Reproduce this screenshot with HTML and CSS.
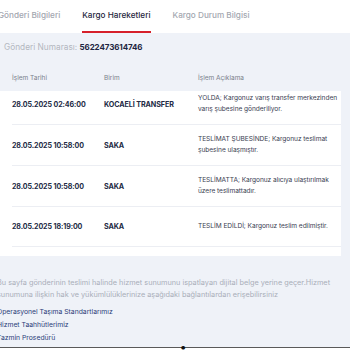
FILE: index.html
```html
<!DOCTYPE html>
<html lang="tr">
<head>
  <meta charset="UTF-8" />
  <meta name="viewport" content="width=device-width, initial-scale=1.0"/>
  <title>Kargo Hareketleri</title>
  <link rel="stylesheet" href="styles.css">
</head>
<body>
  <div class="tabs">
    <div class="tab">Gönderi Bilgileri</div>
    <div class="tab active">Kargo Hareketleri</div>
    <div class="tab">Kargo Durum Bilgisi</div>
  </div>

  <div class="panel">
    <div class="shipment">Gönderi Numarası: <b>5622473614746</b></div>

    <div class="moves">
      <div class="row head">
        <div>İşlem Tarihi</div>
        <div>Birim</div>
        <div>İşlem Açıklama</div>
      </div>
      <div class="list">
        <div class="row item first">
          <div class="date">28.05.2025 02:46:00</div>
          <div class="unit">KOCAELİ TRANSFER</div>
          <div class="desc">YOLDA; Kargonuz varış transfer merkezinden varış şubesine gönderiliyor.</div>
        </div>
        <div class="row item">
          <div class="date">28.05.2025 10:58:00</div>
          <div class="unit">SAKA</div>
          <div class="desc">TESLİMAT ŞUBESİNDE; Kargonuz teslimat şubesine ulaşmıştır.</div>
        </div>
        <div class="row item">
          <div class="date">28.05.2025 10:58:00</div>
          <div class="unit">SAKA</div>
          <div class="desc">TESLİMATTA; Kargonuz alıcıya ulaştırılmak üzere teslimattadır.</div>
        </div>
        <div class="row item">
          <div class="date">28.05.2025 18:19:00</div>
          <div class="unit">SAKA</div>
          <div class="desc">TESLİM EDİLDİ; Kargonuz teslim edilmiştir.</div>
        </div>
      </div>
    </div>

    <div class="info">
      <p>Bu sayfa gönderinin teslimi halinde hizmet sunumunu ispatlayan dijital belge yerine geçer.Hizmet sunumuna ilişkin hak ve yükümlülüklerinize aşağıdaki bağlantılardan erişebilirsiniz</p>
      <a href="#">Operasyonel Taşıma Standartlarımız</a>
      <a href="#">Hizmet Taahhütlerimiz</a>
      <a href="#">Tazmin Prosedürü</a>
    </div>
  </div>

  <div class="next">
    <h2>KARGO TAKİP SONUCU</h2>
  </div>
</body>
</html>
```

FILE: styles.css
```css
* {
  margin: 0;
  padding: 0;
  box-sizing: border-box;
}
body {
  width: 350px;
  height: 350px;
  overflow: hidden;
  background: #fff;
  font-family: Inter, "Noto Sans", sans-serif;
}
.tabs {
  display: flex;
  gap: 22px;
  height: 33px;
  margin-left: -2px;
  background: #fff;
}
.tab {
  padding-top: 10px;
  font-size: 8.2px;
  font-weight: 500;
  color: #a3a7b0;
}
.tab.active {
  color: #1f2740;
  border-bottom: 2px solid #d6202a;
}
.panel {
  background: #eff2f8;
  padding-top: 8px;
  height: 314px;
}
.shipment {
  padding-left: 4px;
  font-size: 8.3px;
  line-height: 12px;
  color: #b3b7bf;
}
.shipment b {
  font-size: 8px;
  letter-spacing: -0.1px;
  color: #1d2541;
  font-weight: 700;
}
.moves {
  margin-top: 7px;
  width: 341px;
}
.row {
  display: grid;
  grid-template-columns: 92px 94px 1fr;
  align-items: center;
}
.head {
  height: 31px;
  padding: 4px 0 0 12px;
  font-size: 6.5px;
  color: #7a7f8b;
}
.list {
  background: #fff;
  padding: 0 0 9px 12px;
}
.item {
  padding: 9px 0;
  border-bottom: 1px solid #eceef3;
  min-height: 40px;
}
.item.first {
  padding-top: 2px;
  min-height: 33px;
}
.date,
.unit {
  font-size: 7.1px;
  font-weight: 700;
  letter-spacing: -0.1px;
  color: #222a44;
}
.unit {
  font-size: 7.2px;
}
.desc {
  font-size: 6.6px;
  line-height: 11px;
  letter-spacing: -0.05px;
  color: #3a4052;
}
.info {
  margin: 21px 0 0 -3px;
  padding-right: 12px;
}
.info p {
  font-size: 7.3px;
  line-height: 12px;
  color: #a9aeb9;
  margin-bottom: 4px;
}
.info a {
  display: block;
  font-size: 6.8px;
  line-height: 13px;
  color: #2c3d78;
  text-decoration: none;
}
.next {
  border-top: 1px solid #5a5a5a;
  text-align: center;
  padding-top: 3px;
}
.next h2 {
  font-size: 22px;
  font-weight: 800;
  color: #111;
  line-height: 16px;
}
```
